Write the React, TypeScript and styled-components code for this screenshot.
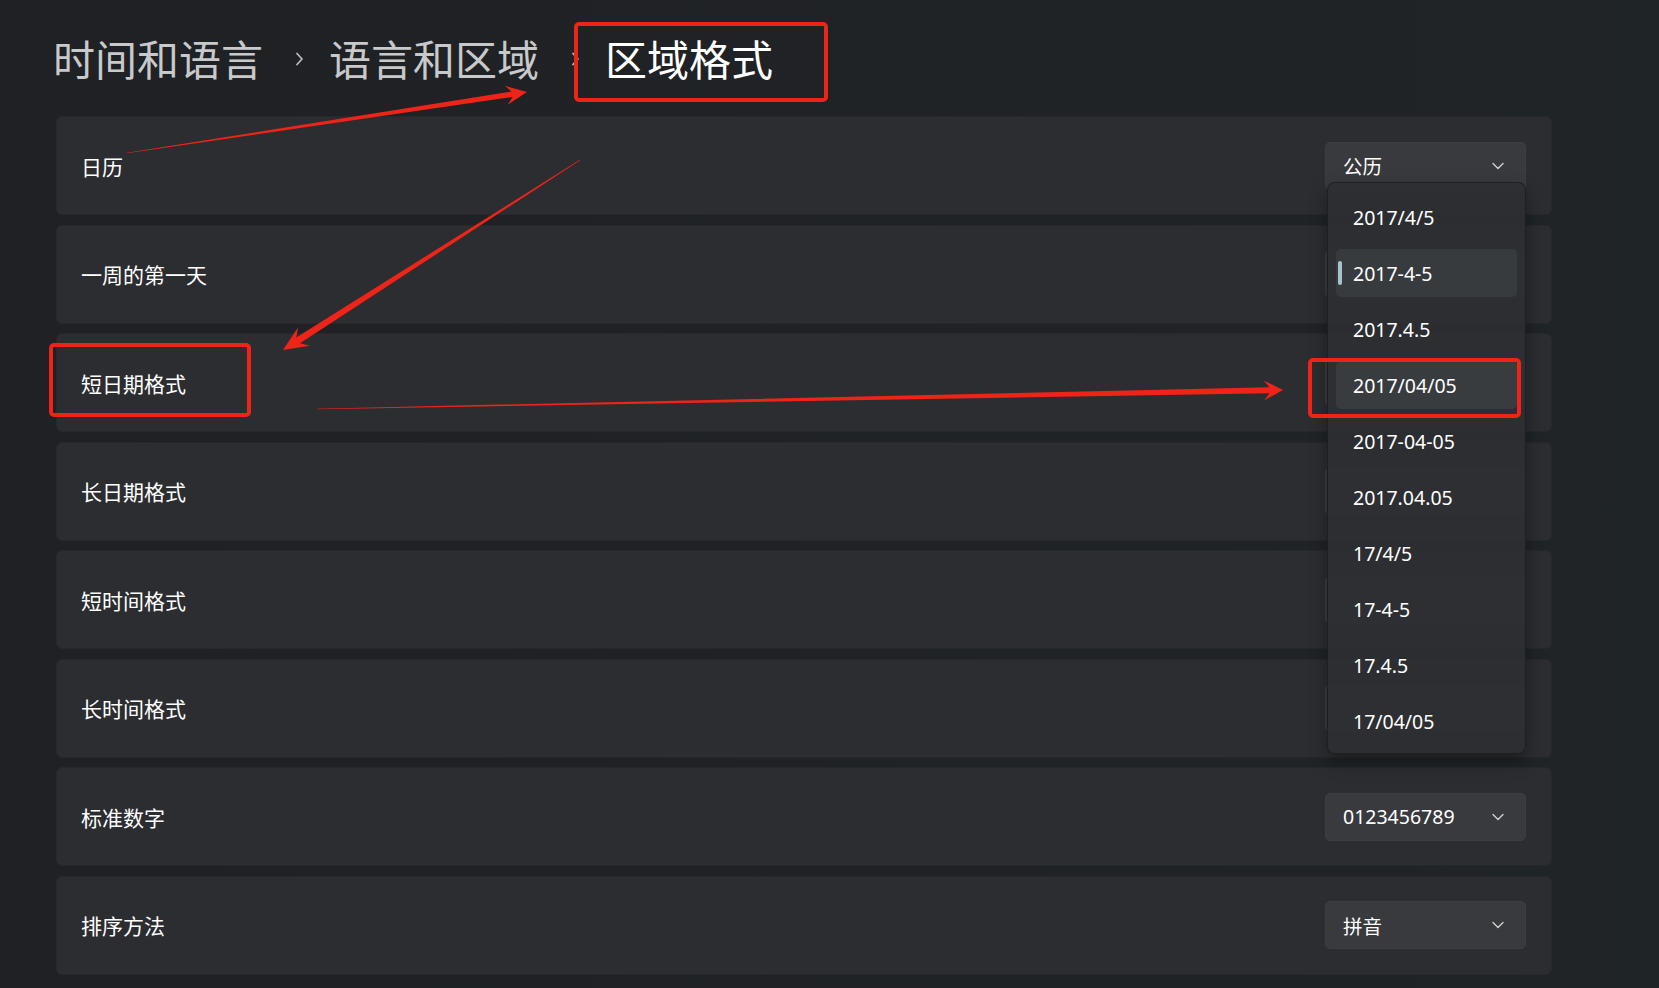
import styled, { createGlobalStyle } from 'styled-components'

const GlobalStyle = createGlobalStyle`
  html, body {
    margin: 0;
    padding: 0;
    background: #1f2225;
  }
  body {
    font-family: "Noto Sans", "Noto Sans CJK SC", sans-serif;
  }
`

const Page = styled.div`
  position: relative;
  width: 1659px;
  height: 988px;
  overflow: hidden;
  background: linear-gradient(90deg, #1f2124 0%, #202326 70%, #1f2427 100%);
`
const Header = styled.div`
  height: 116px;
  box-sizing: border-box;
  display: flex;
  align-items: center;
  padding-left: 53px;
`
const Crumb = styled.span<{ $current?: boolean }>`
  font-family: "Noto Sans CJK SC", sans-serif;
  font-size: 42px;
  line-height: 1;
  color: ${({ $current }) => ($current ? '#ffffff' : '#c8c9ca')};
`
const CrumbSep = styled.span`
  display: flex;
  align-items: center;
  width: 9px;
  margin: 2px 25px 0 32px;
  color: #b9babb;
`
const List = styled.div`
  display: flex;
  flex-direction: column;
  gap: 9.5px;
  margin: 0 107px 0 56px;
`
const Row = styled.div`
  height: 99px;
  box-sizing: border-box;
  display: flex;
  align-items: center;
  justify-content: space-between;
  padding: 0 25px 0 24px;
  background: #2b2d30;
  border: 1px solid #26282b;
  border-radius: 6px;
`
const Label = styled.span`
  font-family: "Noto Sans CJK SC", sans-serif;
  font-size: 21px;
  color: #ffffff;
`
const Combo = styled.div`
  width: 201px;
  height: 48px;
  box-sizing: border-box;
  display: flex;
  align-items: center;
  justify-content: space-between;
  padding: 0 21px 0 17px;
  background: #383a3d;
  border: 1px solid #3c3f42;
  border-radius: 5px;
  font-size: 19.5px;
  color: #ffffff;
`
const Popup = styled.div`
  position: absolute;
  left: 1327px;
  top: 182px;
  width: 199px;
  height: 572px;
  box-sizing: border-box;
  padding: 6px 0;
  display: flex;
  flex-direction: column;
  background: rgba(44, 46, 50, 0.95);
  border: 1px solid rgba(20, 22, 24, 0.6);
  border-radius: 8px;
  box-shadow: 0 8px 18px rgba(0, 0, 0, 0.35);
`
const Option = styled.div<{ $selected?: boolean; $hover?: boolean }>`
  position: relative;
  height: 48px;
  flex-shrink: 0;
  margin: 4px 8px;
  display: flex;
  align-items: center;
  padding-left: 17px;
  border-radius: 5px;
  font-size: 19.5px;
  color: #ffffff;
  background: ${({ $selected, $hover }) =>
    $selected ? '#383b3e' : $hover ? '#393c3f' : 'transparent'};
`
const Indicator = styled.span`
  position: absolute;
  left: 2px;
  top: 12px;
  width: 4px;
  height: 24px;
  border-radius: 2px;
  background: #a7c4cc;
`
const Annotations = styled.svg`
  position: absolute;
  left: 0;
  top: 0;
  pointer-events: none;
`

const ChevronRight = () => (
  <svg width="9" height="14" viewBox="0 0 9 14">
    <path d="M2 1.5 L7 7 L2 12.5" fill="none" stroke="currentColor" strokeWidth="1.8" strokeLinecap="round" strokeLinejoin="round" />
  </svg>
)

const ChevronDown = () => (
  <svg width="12" height="8" viewBox="0 0 12 8">
    <path d="M1 1.5 L6 6.5 L11 1.5" fill="none" stroke="#d0d0d0" strokeWidth="1.4" strokeLinecap="round" strokeLinejoin="round" />
  </svg>
)

// tapered arrow, thin at tail and thick near the head
const arrowPoints = (
  x1: number, y1: number, x2: number, y2: number,
  shaft: number, headLen: number, headHalf: number
) => {
  const len = Math.hypot(x2 - x1, y2 - y1)
  const ux = (x2 - x1) / len
  const uy = (y2 - y1) / len
  const nx = -uy
  const ny = ux
  const neckX = x2 - ux * headLen * 0.72
  const neckY = y2 - uy * headLen * 0.72
  const barbX = x2 - ux * headLen
  const barbY = y2 - uy * headLen
  const pts = [
    [x1 + nx * 0.3, y1 + ny * 0.3],
    [neckX + nx * shaft, neckY + ny * shaft],
    [barbX + nx * headHalf, barbY + ny * headHalf],
    [x2, y2],
    [barbX - nx * headHalf, barbY - ny * headHalf],
    [neckX - nx * shaft, neckY - ny * shaft],
    [x1 - nx * 0.3, y1 - ny * 0.3],
  ]
  return pts.map((p) => `${p[0].toFixed(1)},${p[1].toFixed(1)}`).join(' ')
}

// rows whose combo sits under the open list show no value
const rows = [
  { label: '日历', value: '公历' },
  { label: '一周的第一天', value: '' },
  { label: '短日期格式', value: '' },
  { label: '长日期格式', value: '' },
  { label: '短时间格式', value: '' },
  { label: '长时间格式', value: '' },
  { label: '标准数字', value: '0123456789' },
  { label: '排序方法', value: '拼音' },
]

const options = [
  '2017/4/5',
  '2017-4-5',
  '2017.4.5',
  '2017/04/05',
  '2017-04-05',
  '2017.04.05',
  '17/4/5',
  '17-4-5',
  '17.4.5',
  '17/04/05',
]

const RED = '#ef2419'

const App = () => {
  return (
    <Page>
      <GlobalStyle />
      <Header>
        <Crumb>时间和语言</Crumb>
        <CrumbSep><ChevronRight /></CrumbSep>
        <Crumb>语言和区域</Crumb>
        <CrumbSep><ChevronRight /></CrumbSep>
        <Crumb $current>区域格式</Crumb>
      </Header>
      <List>
        {rows.map((row) => (
          <Row key={row.label}>
            <Label>{row.label}</Label>
            <Combo>
              {row.value && (
                <>
                  <span>{row.value}</span>
                  <ChevronDown />
                </>
              )}
            </Combo>
          </Row>
        ))}
      </List>
      <Popup>
        {options.map((opt, i) => (
          <Option key={opt} $selected={i === 1} $hover={i === 3}>
            {i === 1 && <Indicator />}
            {opt}
          </Option>
        ))}
      </Popup>
      <Annotations width="1659" height="988" viewBox="0 0 1659 988">
        <rect x="576" y="24" width="250" height="76" rx="3" fill="none" stroke={RED} strokeWidth="4" />
        <rect x="51" y="345" width="198" height="70" rx="3" fill="none" stroke={RED} strokeWidth="4" />
        <rect x="1310" y="360" width="209" height="56" rx="3" fill="none" stroke={RED} strokeWidth="4" />
        <polygon points={arrowPoints(127, 153, 527, 92, 2.8, 21, 9.5)} fill={RED} />
        <polygon points={arrowPoints(580, 160, 283, 350, 3.4, 25, 11)} fill={RED} />
        <polygon points={arrowPoints(317, 409, 1283, 390, 3, 19, 10)} fill={RED} />
      </Annotations>
    </Page>
  )
}

export default App
